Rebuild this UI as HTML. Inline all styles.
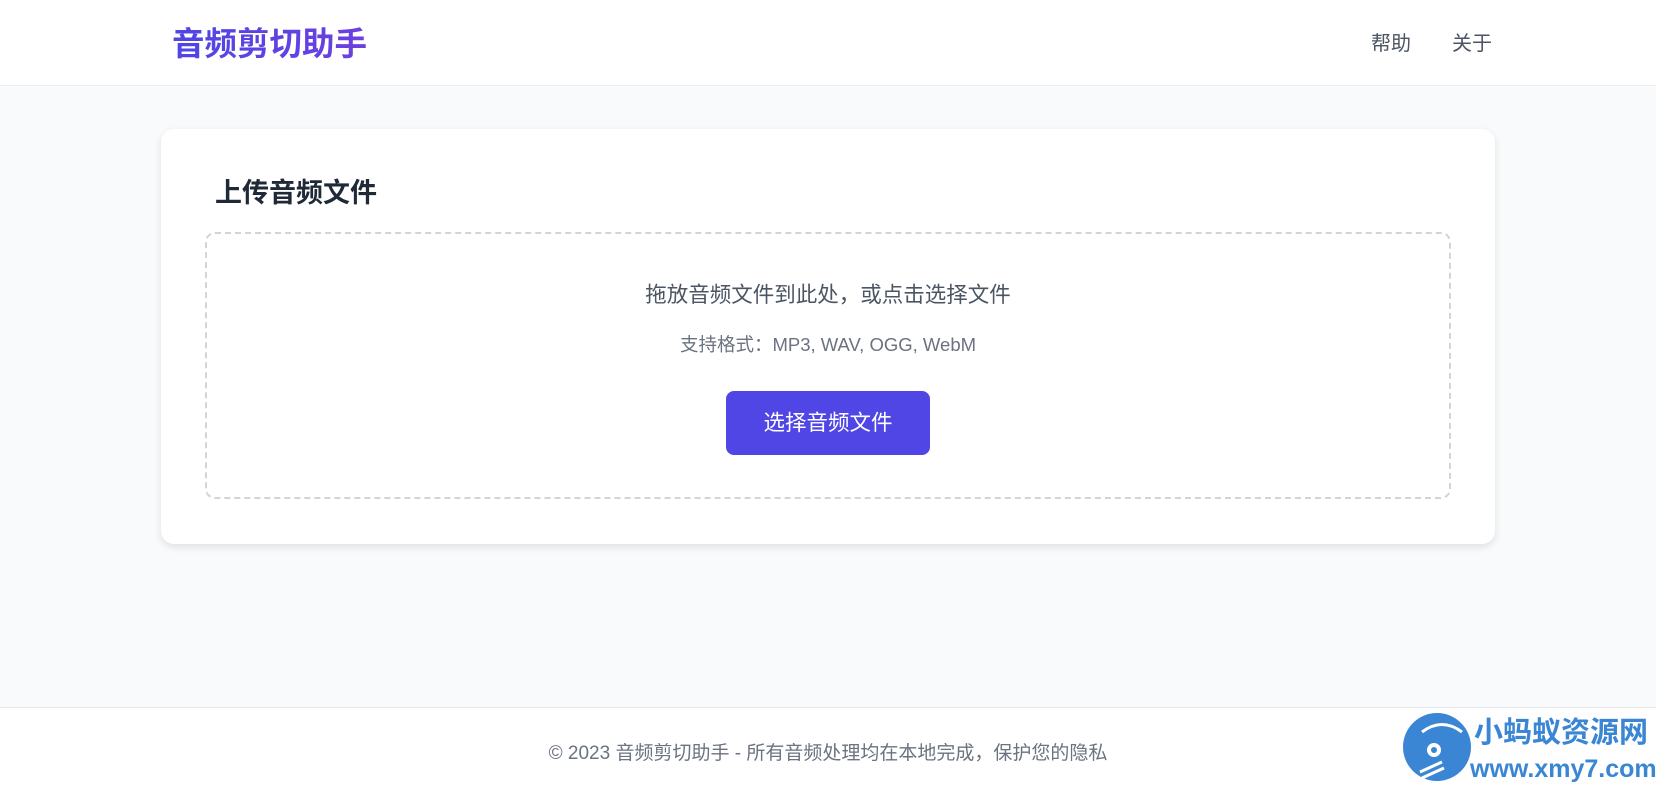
<!DOCTYPE html>
<html><head><meta charset="utf-8"><style>
*{margin:0;padding:0;box-sizing:border-box}
body{width:1656px;height:798px;background:#f9fafb;font-family:"Liberation Sans","Noto Sans CJK SC",sans-serif;position:relative;overflow:hidden}
div{white-space:nowrap}
header{position:absolute;left:0;top:0;width:1656px;height:86px;background:#fff;border-bottom:1px solid #eceef1}
.logo{position:absolute;left:172px;top:24px;font-size:32.5px;font-weight:bold;line-height:40px;background:linear-gradient(90deg,#4f46e5,#6d3fe0);-webkit-background-clip:text;color:transparent}
.nav{position:absolute;top:31px;font-size:20px;color:#4b5563;line-height:26px}
.card{position:absolute;left:161px;top:129px;width:1334px;height:415px;background:#fff;border-radius:13px;box-shadow:0 3px 8px rgba(0,0,0,.1)}
h2{position:absolute;left:215px;top:177px;font-size:27px;font-weight:bold;color:#1f2937;line-height:32px;white-space:nowrap}
.drop{position:absolute;left:205px;top:232px;width:1246px;height:267px;border:2px dashed #d1d5db;border-radius:10px}
.t1{position:absolute;left:0;width:1656px;top:280px;text-align:center;font-size:21.5px;color:#4b5563;line-height:30px}
.t2{position:absolute;left:0;width:1656px;top:332px;text-align:center;font-size:18.5px;color:#6b7280;line-height:26px}
.btn{position:absolute;left:726px;top:391px;width:204px;height:64px;background:#4f46e5;border-radius:8px;color:#fff;font-size:21.5px;line-height:64px;text-align:center}
footer{position:absolute;left:0;top:707px;width:1656px;height:91px;background:#fff;border-top:1px solid #e5e7eb}
.ft{position:absolute;left:0;width:1656px;top:741px;text-align:center;font-size:19px;color:#6b7280;line-height:26px}
</style></head><body>
<header><div class="logo">音频剪切助手</div>
<div class="nav" style="left:1371px">帮助</div><div class="nav" style="left:1452px">关于</div></header>
<div class="card"></div>
<h2>上传音频文件</h2>
<div class="drop"></div>
<div class="t1">拖放音频文件到此处，或点击选择文件</div>
<div class="t2">支持格式：MP3, WAV, OGG, WebM</div>
<div class="btn">选择音频文件</div>
<footer></footer>
<div class="ft">© 2023 音频剪切助手 - 所有音频处理均在本地完成，保护您的隐私</div>
<svg style="position:absolute;left:1402px;top:712px" width="70" height="70" viewBox="0 0 70 70"><circle cx="35" cy="35" r="34" fill="#3a86d4"/><path d="M20 20 Q40 5 60 20" stroke="#fff" stroke-width="3" fill="none"/><circle cx="32" cy="38" r="7" fill="#fff"/><circle cx="32" cy="38" r="3" fill="#3a86d4"/><path d="M18 60 L40 50 M20 66 L42 56" stroke="#fff" stroke-width="3"/></svg>
<div style="position:absolute;left:1474px;top:716px;font-size:29px;font-weight:bold;color:#3a86d4;line-height:34px">小蚂蚁资源网</div>
<div style="position:absolute;left:1470px;top:754px;font-size:25px;font-weight:bold;color:#3a86d4;line-height:30px">www.xmy7.com</div>
</body></html>
